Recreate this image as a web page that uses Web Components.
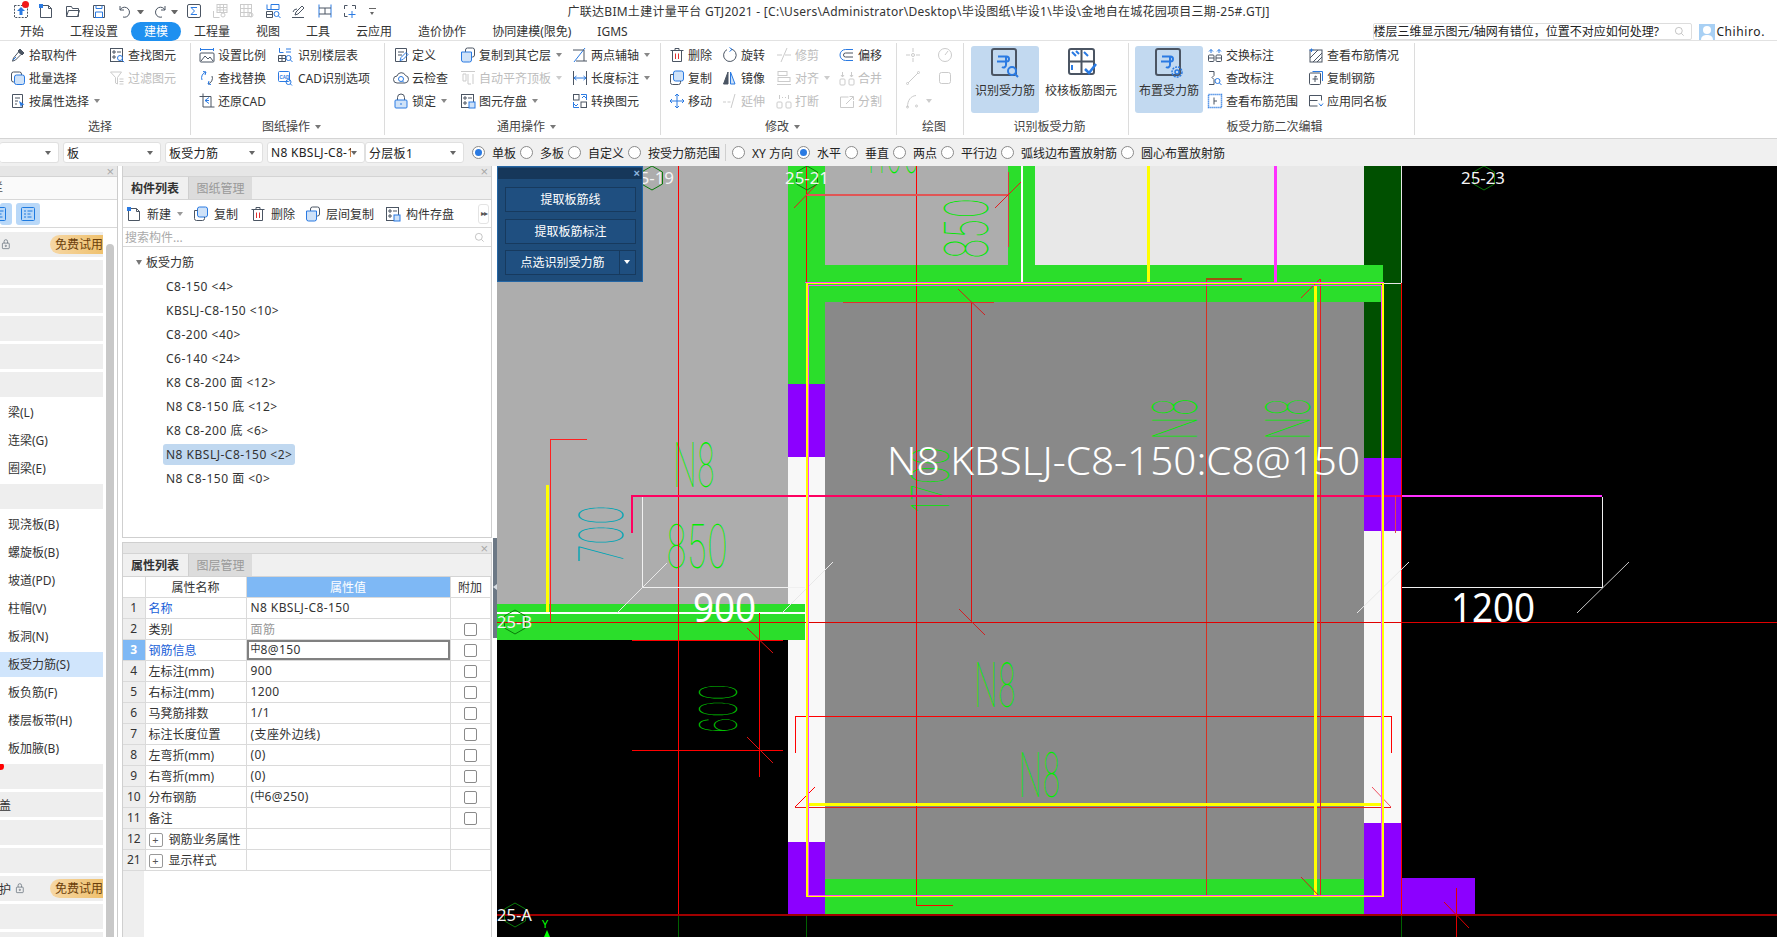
<!DOCTYPE html>
<html lang="zh">
<head>
<meta charset="utf-8">
<title>GTJ2021</title>
<style>
  html, body { margin: 0; height: 100%; overflow: hidden; background: #fff; }
  body { font: 12px "Noto Sans", "Noto Sans CJK SC", sans-serif; color: #333; }
</style>
</head>
<body>
<gtj-app>
  <gtj-titlebar slot="title">广联达BIM土建计量平台 GTJ2021 - [C:\Users\Administrator\Desktop\毕设图纸\毕设1\毕设\金地自在城花园项目三期-25#.GTJ]</gtj-titlebar>
  <gtj-tabs slot="tabs"></gtj-tabs>
  <gtj-ribbon slot="ribbon">
    <rb-group label="选择" style="width:191px;padding-left:10px">
      <rb-col style="width:99px">
        <rb-item icon="pick">拾取构件</rb-item>
        <rb-item icon="batch">批量选择</rb-item>
        <rb-item icon="attr" dd>按属性选择</rb-item>
      </rb-col>
      <rb-col>
        <rb-item icon="find">查找图元</rb-item>
        <rb-item icon="filter" disabled>过滤图元</rb-item>
      </rb-col>
    </rb-group>
    <rb-group label="图纸操作" dd style="width:194px;padding-left:8px">
      <rb-col style="width:78px">
        <rb-item icon="scale">设置比例</rb-item>
        <rb-item icon="replace">查找替换</rb-item>
        <rb-item icon="restore">还原CAD</rb-item>
      </rb-col>
      <rb-col>
        <rb-item icon="floor" wide>识别楼层表</rb-item>
        <rb-item icon="cadopt" wide>CAD识别选项</rb-item>
      </rb-col>
    </rb-group>
    <rb-group label="通用操作" dd style="width:276px;padding-left:8px">
      <rb-col style="width:67px">
        <rb-item icon="define">定义</rb-item>
        <rb-item icon="cloud">云检查</rb-item>
        <rb-item icon="lock" dd>锁定</rb-item>
      </rb-col>
      <rb-col style="width:112px">
        <rb-item icon="copyfl" dd>复制到其它层</rb-item>
        <rb-item icon="autoalign" disabled dd>自动平齐顶板</rb-item>
        <rb-item icon="store" dd>图元存盘</rb-item>
      </rb-col>
      <rb-col>
        <rb-item icon="twopt" dd>两点辅轴</rb-item>
        <rb-item icon="length" dd>长度标注</rb-item>
        <rb-item icon="convert">转换图元</rb-item>
      </rb-col>
    </rb-group>
    <rb-group label="修改" dd style="width:236px;padding-left:8px">
      <rb-col style="width:53px">
        <rb-item icon="del">删除</rb-item>
        <rb-item icon="copy">复制</rb-item>
        <rb-item icon="move">移动</rb-item>
      </rb-col>
      <rb-col style="width:54px">
        <rb-item icon="rotate">旋转</rb-item>
        <rb-item icon="mirror">镜像</rb-item>
        <rb-item icon="extend" disabled>延伸</rb-item>
      </rb-col>
      <rb-col style="width:63px">
        <rb-item icon="trim" disabled>修剪</rb-item>
        <rb-item icon="align" disabled dd>对齐</rb-item>
        <rb-item icon="break" disabled>打断</rb-item>
      </rb-col>
      <rb-col>
        <rb-item icon="offset">偏移</rb-item>
        <rb-item icon="merge" disabled>合并</rb-item>
        <rb-item icon="split" disabled>分割</rb-item>
      </rb-col>
    </rb-group>
    <rb-group label="绘图" style="width:67px;padding-left:8px">
      <rb-col style="width:32px">
        <rb-item icon="point" disabled></rb-item>
        <rb-item icon="line" disabled></rb-item>
        <rb-item icon="arc" disabled dd></rb-item>
      </rb-col>
      <rb-col>
        <rb-item icon="circle" disabled></rb-item>
        <rb-item icon="square" disabled></rb-item>
      </rb-col>
    </rb-group>
    <rb-group label="识别板受力筋" style="width:165px;padding-left:7px">
      <rb-big icon="recog" active style="width:68px">识别受力筋</rb-big>
      <rb-big icon="check" style="width:74px;margin-left:5px">校核板筋图元</rb-big>
    </rb-group>
    <rb-group label="板受力筋二次编辑" style="width:286px;padding-left:6px">
      <rb-big icon="place" active style="width:68px;margin-right:4px">布置受力筋</rb-big>
      <rb-col style="width:101px">
        <rb-item icon="swap">交换标注</rb-item>
        <rb-item icon="chg">查改标注</rb-item>
        <rb-item icon="range">查看布筋范围</rb-item>
      </rb-col>
      <rb-col>
        <rb-item icon="view">查看布筋情况</rb-item>
        <rb-item icon="rebar">复制钢筋</rb-item>
        <rb-item icon="apply">应用同名板</rb-item>
      </rb-col>
    </rb-group>
  </gtj-ribbon>
  <gtj-options slot="options"></gtj-options>
  <gtj-sidebar slot="side"></gtj-sidebar>
  <gtj-list-panel slot="list"></gtj-list-panel>
  <gtj-prop-panel slot="props"></gtj-prop-panel>
  <gtj-splitter slot="split"></gtj-splitter>
  <gtj-canvas slot="canvas">
    <gtj-float-panel></gtj-float-panel>
  </gtj-canvas>
</gtj-app>

<script>
// icon bodies, 16 grid unless the name is in BIG
const ICONS = {
  upload: '<rect x="1.5" y="2.5" width="13" height="12" stroke-dasharray="2 1.2"/><path class="s" d="M8 4l4 4H9.5v4h-3V8H4z"/>',
  newfile: '<path d="M2.5 2.5h8l3 3v9h-11z"/><path d="M10.5 2.5v3h3"/><rect class="s" x="1" y="1" width="4" height="4"/>',
  open: '<path d="M1.5 13.5v-10h5l1 2h6v8z"/><path d="M1.5 13.5l2-6h11l-2 6"/>',
  save: '<path d="M2.5 2.5h11v12h-11z" rx="2"/><path class="b" d="M5 2.5v3h6v-3M4.5 9h7v5.5h-7z"/>',
  undo: '<path d="M4 3v4h4"/><path d="M4 7a5 5 0 1 1 3 7"/>',
  redo: '<path d="M12 3v4H8"/><path d="M12 7a5 5 0 1 0-3 7"/>',
  sigma: '<rect class="n" x="1.5" y="1.5" width="13" height="13" rx="1.5"/><path class="b" d="M11 4.5H5l3.5 3.5L5 11.500h6"/>',
  qgrid: '<rect x="5" y="1.500" width="10" height="8"/><path d="M5 4.500h10M5 7h10M8 1.500v8M11.500 1.500v8"/><path d="M1.500 8v6.500h6"/><circle cx="11" cy="12" r="2"/>',
  qgrid2: '<rect x="1.500" y="1.500" width="11" height="12"/><path d="M1.500 5.500h11M1.500 9.500h11M5 1.500v12M9 1.500v12"/><circle cx="12" cy="12" r="2"/>',
  qfind: '<path class="b" d="M2 1.500v5h4M6 1.500h8v5H6z"/><path d="M1.500 8.500h6v6h-6zM1.500 11.500h6"/><circle class="b" cx="11.500" cy="11" r="2.500"/><path class="b" d="M13.500 13l2 2"/>',
  qpen: '<path d="M2 14.500h12"/><path d="M3 9a4 4 0 0 1 4-3"/><path d="M5 12l1-3 6-6 2 2-6 6z"/>',
  qruler: '<path class="b" d="M2 1.500v13M14 1.500v13"/><path d="M2 5h12M2 11h12M8 5v6"/>',
  qadd: '<path d="M2.500 6V2.500h3M10 2.500h3.500V6M2.500 10v3.500h3"/><path class="b" d="M10 8v7M6.500 11.500h7"/>',
  pick: '<path class="d" d="M10 2l4 4-2 2-4-4z"/><path d="M8.500 5l2.500 2.500-5.500 5.500-3 1.200 1-3.200z"/><path class="b" d="M3 13l3-3"/>',
  batch: '<rect x="1.500" y="2" width="10" height="10" rx="2"/><rect class="b l" x="4.500" y="5" width="10" height="9.500" rx="2"/>',
  attr: '<path d="M2.500 1.500h10v13h-10z"/><path d="M5 5h5M5 8h3M5 11h2"/><path class="s" d="M9 8l5.500 3.500-2.500.5-1 2.500z"/>',
  find: '<rect x="1.500" y="1.500" width="12" height="13"/><path d="M4 4h2v2H4zM8 5h4M4 9h2v2H4z"/><circle class="b" cx="11" cy="11" r="2.500"/><path class="b" d="M13 13l2.200 2.200"/>',
  filter: '<path d="M1.500 2h11L8.500 7.500V14l-2-1V7.500z"/><path d="M10.500 9h4M10.500 11.500h4M10.500 14h4"/>',
  scale: '<path class="b" d="M1.500 1v3M14.500 1v3M1.500 2.500h13"/><rect x="1" y="6" width="14" height="9" rx="1"/><path d="M2 14l4-5 3 3 2-2 3 4"/>',
  floor: '<path class="b" d="M2.500 1v4.500h4M9 2h5M9 5h5"/><path d="M1.500 8.500h7v6h-7zM1.500 11.500h7M5 8.500v6"/><circle class="b" cx="11.500" cy="11" r="2.500"/><path class="b" d="M13.500 13l2 2"/>',
  replace: '<path class="b" d="M3 10a6 6 0 0 1 4-8M4 1.500l3 .5-1 3"/><path d="M13 6a6 6 0 0 1-4 8"/><path class="b" d="M12 14.500l-3-.5 1-3"/>',
  cadopt: '<rect class="b" x="1.500" y="1.500" width="11" height="10" rx="1"/><text class="t" x="2.500" y="8.500">CAD</text><circle class="b" cx="11.500" cy="12" r="2.500"/><path class="b" d="M13.500 14l1.500 1.500"/>',
  restore: '<path d="M4 .500v13.500h11.500M.500 3.500H12v10.500"/><path class="b" d="M10 4.500L6 7.500l4 3M6 7.500h4"/>',
  define: '<path d="M2.500 1.500h11v13h-11z"/><path d="M5 5h6M5 8h4"/><path class="b" d="M7 13.500l1-3 5-5 2 2-5 5z"/>',
  cloud: '<path d="M4 13a3.500 3.500 0 0 1 0-7 4.500 4.500 0 0 1 8.500-.500A3.800 3.800 0 0 1 12 13z"/><circle class="b" cx="8" cy="9" r="2.500"/><path class="b" d="M9.500 11l1.500 1.500"/>',
  lock: '<path d="M4.500 7V4.500a3.500 3.500 0 0 1 7 0V7"/><rect class="b l" x="2" y="7" width="12" height="8" rx="1"/><path class="b" d="M8 10v2"/>',
  copyfl: '<rect x="5.500" y="1" width="9" height="9" rx="2" class="n"/><path class="b l" d="M1.500 5h10v8a2 2 0 0 1-2 2h-6a2 2 0 0 1-2-2z"/>',
  autoalign: '<path d="M1 1.500h14M3 4v7h3V4zM8 4v10h3"/><path d="M13 4v10"/>',
  store: '<rect x="1.500" y="1.500" width="12" height="13"/><path d="M4 4h2v2H4zM8 5h4M4 9h2v2H4z"/><rect class="b l" x="9" y="9" width="6" height="6"/>',
  twopt: '<path class="b" d="M2 15L13 1"/><path d="M1 3h11v11"/><path d="M4 14h11"/>',
  length: '<path d="M1.500 1v14M14.500 1v14"/><path class="b" d="M2 8h12M4.500 6L2 8l2.500 2M11.500 6L14 8l-2.500 2"/>',
  convert: '<rect x="1.500" y="1.500" width="5.500" height="5.500"/><rect x="9" y="9" width="5.500" height="5.500"/><path class="b" d="M9 1.500h5.500V7M7 14.500H1.500V9"/><path class="b" d="M10 5l2-2 2 2M2 11l2 2 2-2"/>',
  del: '<path d="M3.500 4v10.500h9V4M1.500 3.500h13M6 3V1.500h4V3"/><path class="r" d="M6.500 6.500v5.500M9.500 6.500v5.500"/>',
  copy: '<rect class="b l" x="4.500" y="1" width="10" height="10" rx="2"/><path d="M4.500 4.500H1.500v8a2 2 0 0 0 2 2h6a2 2 0 0 0 2-2v-1.500"/>',
  move: '<path class="b" d="M8 1v14M1 8h14M6 3l2-2 2 2M6 13l2 2 2-2M3 6L1 8l2 2M13 6l2 2-2 2"/>',
  rotate: '<path d="M9 2a6.300 6.300 0 1 1-4 .600"/><path class="b" d="M7.500 .500L10 2.500 7.500 4.500"/>',
  mirror: '<path class="d" d="M6 2L1.500 14H6z"/><path class="b l" d="M8.500 2L13 14H8.500z"/>',
  extend: '<path d="M1 9h3M5.500 9h3"/><path d="M9 15L13 1"/>',
  trim: '<path d="M1 8h5M9 8h6"/><path d="M5 15L11 1"/>',
  align: '<rect x="2" y="1.500" width="9" height="4"/><rect x="2" y="7.500" width="12" height="4"/><path d="M1 14.500h14"/>',
  break: '<rect x="1" y="9" width="5" height="6" rx="1"/><rect x="10" y="9" width="5" height="6" rx="1"/><path d="M3.500 2v4M12.500 2v4M6 4l1 1M10 4L9 5"/>',
  offset: '<path class="b" d="M14 2.500H6.500a5.500 5.500 0 0 0 0 11H14"/><path d="M14 6H6.500a2 2 0 0 0 0 4H14"/>',
  merge: '<rect x="1" y="9" width="5" height="6" rx="1"/><rect x="10" y="9" width="5" height="6" rx="1"/><path d="M3.500 2v5M12.500 2v5M2 5l1.500 2L5 5M11 5l1.500 2L14 5"/>',
  split: '<path d="M1.500 4h8M1.500 4v10.500h13V8"/><path d="M7 11l7-7M10.500 3.500H14.500V7"/>',
  point: '<circle cx="8" cy="8" r="1.500"/><path d="M8 1v4M8 11v4M1 8h4M11 8h4"/>',
  circle: '<circle cx="8" cy="8" r="6.500"/><path d="M8 8l3-4"/>',
  line: '<circle cx="2.500" cy="13.500" r="1"/><circle cx="13.500" cy="2.500" r="1"/><path d="M3 13L13 3"/>',
  square: '<rect x="2.500" y="2.500" width="11" height="11" rx="2"/>',
  arc: '<path d="M2.500 14C2.500 7 6 3 11 2.500"/><circle cx="2.500" cy="14" r="1"/><circle cx="11.500" cy="13" r="1"/>',
  swap: '<path class="b" d="M2 4.500L4 2.500 6 4.500M14 4.500L12 2.500 10 4.500M4 2.500V6M12 2.500V6"/><rect x="1.500" y="8" width="5.500" height="6.500" rx="1"/><rect x="9" y="8" width="5.500" height="6.500" rx="1"/><path d="M1.500 11h5.500M9 11h5.500"/>',
  chg: '<path d="M2 1.500h5v4l-2 2 2 2v5H2"/><circle class="b" cx="10.500" cy="11" r="2.500"/><path class="b" d="M12.500 13l2 2"/>',
  range: '<rect class="b" x="1.500" y="1.500" width="13" height="13" stroke-dasharray="1.200 .8" stroke-width="1.500"/><path d="M7 4.500v7M7 8h3"/>',
  view: '<rect x="2" y="3" width="12" height="12"/><path d="M2 11l8-8M5 15L14 6M9 15l5-5"/><path class="b" d="M3.500 1.500v3.500M1.500 3h4"/>',
  rebar: '<rect x="1.500" y="3" width="11" height="11.500" rx="1"/><path class="b" d="M4.500 1.500h10V11"/><path d="M7 6v6M4.500 9H10M7 6l2 1"/>',
  apply: '<path d="M1.500 2.500h12v5M1.500 2.500v10.500h8M1.500 7.500h8"/><path class="b" d="M11 10.500l2 2.500 2-2.500"/>',
  recog: '<rect x="3" y="2" width="24" height="26" rx="2" stroke-width="2"/><path class="b" stroke-width="2" d="M9 9.500h8.500a2.500 2.500 0 0 1 0 5H8M17 9v9a2.500 2.500 0 0 1-4 2"/><circle class="b" cx="23" cy="24" r="4" stroke-width="2"/><path class="b" stroke-width="2" d="M26 27l3 3"/>',
  check: '<rect x="4" y="2" width="25" height="25" rx="2" stroke-width="2"/><path stroke-width="2" d="M16.500 2v25M4 14.500h25"/><path class="b" stroke-width="2" d="M7 5l4 4M11 4l3 3M19 5l4 4M7 18v5"/><path class="b" stroke-width="2.500" d="M20 22l4 4 7-9"/>',
  place: '<rect x="3" y="2" width="24" height="26" rx="2" stroke-width="2"/><path class="b" stroke-width="2" d="M9 9.500h8.500a2.500 2.500 0 0 1 0 5H8M17 9v9a2.500 2.500 0 0 1-4 2"/><circle class="b" cx="24" cy="25" r="2" stroke-width="1.500"/><circle class="b" cx="24" cy="25" r="5" stroke-width="1.500" stroke-dasharray="2 1"/>',
  list1: '<rect class="b" x="1.500" y="1.500" width="13" height="13" rx="1"/><path class="b" d="M4 5h2M7.500 5h5M4 8h2M7.500 8h3M4 11h2M7.500 11h4"/>',
  plock: '<rect x="2" y="6" width="10" height="8" rx="1"/><path d="M4.500 6V3.500a2.500 2.500 0 0 1 5 0V6"/><circle cx="7" cy="10" r="1"/>',
  search: '<circle cx="7" cy="7" r="5"/><path d="M11 11l3 3"/>'
};
const BIG = ['recog', 'check', 'place'];

class GtjIcon extends HTMLElement {
  constructor() {
    super();
    const name = this.getAttribute('name');
    const box = BIG.includes(name) ? 32 : 16;
    this.attachShadow({ mode: 'open' }).innerHTML = `
      <style>
        :host { display: inline-block; width: 16px; height: 16px; flex: none; color: #4b5563; --b: #2a7ae2; }
        :host([disabled]) { color: #cbcbcb; --b: #cbcbcb; }
        svg { display: block; width: 100%; height: 100%; fill: none; stroke: currentColor; stroke-width: 1; }
        .b { stroke: var(--b); }
        .l { fill: #cfe2f8; }
        .s { fill: var(--b); stroke: none; }
        .d { fill: currentColor; }
        .r { stroke: #e03030; }
        .n { fill: #fff; }
        .t { fill: var(--b); stroke: none; font: bold 4.500px "Liberation Sans", sans-serif; }
      </style>
      <svg viewBox="0 0 ${box} ${box}">${ICONS[name] || ''}</svg>`;
  }
}
customElements.define('gtj-icon', GtjIcon);

class GtjApp extends HTMLElement {
  constructor() {
    super();
    this.attachShadow({ mode: 'open' }).innerHTML = `
      <style>
        :host { display: flex; flex-direction: column; height: 937px; width: 1777px; overflow: hidden; }
        .main { flex: 1; min-height: 0; display: flex; }
        .mid { width: 371px; margin-left: 4px; display: flex; flex-direction: column; gap: 4px; flex: none; }
      </style>
      <slot name="title"></slot>
      <slot name="tabs"></slot>
      <slot name="ribbon"></slot>
      <slot name="options"></slot>
      <div class="main">
        <slot name="side"></slot>
        <div class="mid">
          <slot name="list"></slot>
          <slot name="props"></slot>
        </div>
        <slot name="split"></slot>
        <slot name="canvas"></slot>
      </div>`;
  }
}
customElements.define('gtj-app', GtjApp);

class GtjTitlebar extends HTMLElement {
  constructor() {
    super();
    // icon name and centre x along the quick access bar
    const qat = [['upload', 21], ['newfile', 46], ['open', 73], ['save', 99], ['undo', 124], ['dd', 140], ['redo', 161], ['dd', 174],
      ['sigma', 194], ['qgrid', 220, 1], ['qgrid2', 247, 1], ['qfind', 273], ['qpen', 298], ['qruler', 325], ['qadd', 350], ['more', 372]];
    let right = 0;
    const html = qat.map(([n, c, off]) => {
      const w = n === 'dd' || n === 'more' ? 7 : 16;
      const left = c - w / 2 - right;
      right = c + w / 2;
      if (n === 'dd') return `<i class="dd" style="margin-left:${left}px"></i>`;
      if (n === 'more') return `<i class="more" style="margin-left:${left}px"></i>`;
      return `<gtj-icon name="${n}" ${off ? 'disabled' : ''} style="margin-left:${left}px"></gtj-icon>`;
    }).join('');
    this.attachShadow({ mode: 'open' }).innerHTML = `
      <style>
        :host { display: flex; align-items: center; height: 22px; flex: none; background: #fff; white-space: nowrap; position: relative; }
        .dd { width: 0; height: 0; border: 3px solid transparent; border-top: 4px solid #666; border-bottom: 0; margin-top: 1px; box-sizing: content-box; width: 1px; }
        .more { width: 7px; height: 6px; border-top: 1px solid #666; position: relative; }
        .more::after { content: ""; position: absolute; left: 1px; top: 3px; border: 2.500px solid transparent; border-top: 3px solid #666; border-bottom: 0; }
        .dot { position: absolute; left: 22px; top: 1px; width: 7px; height: 7px; border-radius: 50%; background: #f01818; }
        .t { margin-left: 192px; color: #333; letter-spacing: .27px; }
      </style>
      ${html}<span class="dot"></span><span class="t"><slot></slot></span>`;
  }
}
customElements.define('gtj-titlebar', GtjTitlebar);

class GtjTabs extends HTMLElement {
  constructor() {
    super();
    const tabs = ['开始', '工程设置', '建模', '工程量', '视图', '工具', '云应用', '造价协作', '协同建模(限免)', 'IGMS'];
    this.attachShadow({ mode: 'open' }).innerHTML = `
      <style>
        :host { display: flex; align-items: center; height: 19px; padding-left: 7px; flex: none; background: #fff; box-shadow: inset 0 -1px 0 #e2e2e2; font-size: 12px; color: #333; white-space: nowrap; }
        .tab { padding: 0 13px; height: 19px; line-height: 20px; }
        .on { background: #1e90f0; color: #fff; border-radius: 10px; }
        .q { margin-left: auto; width: 317px; height: 15px; border: 1px solid #ddd; border-radius: 2px; display: flex; align-items: center; overflow: hidden; color: #222; background: #fff; }
        .q span { flex: 1; margin-left: -1px; line-height: 15px; }
        .q gtj-icon { width: 11px; height: 11px; margin: 0 6px 0 0; color: #aaa; }
        .ava { width: 16px; height: 16px; margin: 0 1px 0 7px; }
        .me { margin-right: 12px; letter-spacing: .6px; color: #222; }
      </style>
      ${tabs.map((t, i) => `<div class="tab ${i === 2 ? 'on' : ''}">${t}</div>`).join('')}
      <div class="q"><span>楼层三维显示图元/轴网有错位，位置不对应如何处理?</span><gtj-icon name="search"></gtj-icon></div>
      <svg class="ava" viewBox="0 0 16 16"><rect width="16" height="16" fill="#a8d0f4"/><circle cx="8" cy="6" r="4" fill="#fff"/><path d="M2 16c0-4 3-5 6-5s6 1 6 5z" fill="#fff"/></svg>
      <span class="me">Chihiro.</span>`;
  }
}
customElements.define('gtj-tabs', GtjTabs);

class GtjRibbon extends HTMLElement {
  constructor() {
    super();
    this.attachShadow({ mode: 'open' }).innerHTML = `
      <style>
        :host { display: flex; height: 98px; flex: none; background: #fff; padding-top: 2px; box-sizing: border-box; box-shadow: inset 0 -1px 0 #d4d4d4; }
      </style>
      <slot></slot>`;
  }
}
customElements.define('gtj-ribbon', GtjRibbon);

class RbGroup extends HTMLElement {
  constructor() {
    super();
    const dd = this.hasAttribute('dd');
    this.attachShadow({ mode: 'open' }).innerHTML = `
      <style>
        :host { display: flex; flex-direction: column; height: 92px; flex: none; box-sizing: border-box; border-right: 1px solid #dcdcdc; }
        .body { display: flex; flex: 1; }
        .lab { height: 16px; line-height: 18px; text-align: center; color: #444; display: flex; justify-content: center; align-items: center; gap: 5px; }
        .lab i { border: 3.500px solid transparent; border-top: 4px solid #777; border-bottom: 0; }
      </style>
      <div class="body"><slot></slot></div>
      <div class="lab">${this.getAttribute('label')}${dd ? '<i></i>' : ''}</div>`;
  }
}
customElements.define('rb-group', RbGroup);

class RbCol extends HTMLElement {
  constructor() {
    super();
    this.attachShadow({ mode: 'open' }).innerHTML = `
      <style>:host { display: flex; flex-direction: column; flex: none; }</style><slot></slot>`;
  }
}
customElements.define('rb-col', RbCol);

class RbItem extends HTMLElement {
  constructor() {
    super();
    const off = this.hasAttribute('disabled');
    this.attachShadow({ mode: 'open' }).innerHTML = `
      <style>
        :host { display: flex; align-items: center; height: 23px; gap: 3px; color: #333; white-space: nowrap; }
        :host([disabled]) { color: #bdbdbd; }
        :host([wide]) { gap: 5px; }
        i { border: 3px solid transparent; border-top: 4px solid #888; border-bottom: 0; margin-left: 2px; }
        :host([disabled]) i { border-top-color: #ccc; }
      </style>
      <gtj-icon name="${this.getAttribute('icon')}" ${off ? 'disabled' : ''}></gtj-icon><slot></slot>${this.hasAttribute('dd') ? '<i></i>' : ''}`;
  }
}
customElements.define('rb-item', RbItem);

class RbBig extends HTMLElement {
  constructor() {
    super();
    this.attachShadow({ mode: 'open' }).innerHTML = `
      <style>
        :host { display: flex; flex-direction: column; align-items: center; height: 67px; margin-top: 3px; padding-top: 1px; box-sizing: border-box; border-radius: 3px; white-space: nowrap; color: #333; flex: none; }
        :host([active]) { background: #c2d9f0; }
        gtj-icon { width: 32px; height: 32px; margin-bottom: 2px; }
      </style>
      <gtj-icon name="${this.getAttribute('icon')}"></gtj-icon><slot></slot>`;
  }
}
customElements.define('rb-big', RbBig);

class GtjOptions extends HTMLElement {
  constructor() {
    super();
    const combos = [['', 59], ['板', 98], ['板受力筋', 98], ['N8 KBSLJ-C8-150', 98], ['分层板1', 99]];
    const radios = [['单板', 1], ['多板'], ['自定义'], ['按受力筋范围'], '|', ['XY 方向'], ['水平', 1], ['垂直'], ['两点'], ['平行边'], ['弧线边布置放射筋'], ['圆心布置放射筋']];
    this.attachShadow({ mode: 'open' }).innerHTML = `
      <style>
        :host { display: flex; align-items: center; height: 27px; flex: none; background: #f0f0f0; white-space: nowrap; color: #222; overflow: hidden; }
        .combo { height: 21px; box-sizing: border-box; border: 1px solid #e0e0e0; border-radius: 3px; background: #fff; margin-right: 4px; display: flex; align-items: center; padding: 0 3px; flex: none; position: relative; overflow: hidden; }
        .combo:nth-child(5) { margin-right: 0; }
        .combo span { overflow: hidden; width: calc(100% - 10px); letter-spacing: .3px; }
        .combo i { position: absolute; right: 7px; top: 8px; border: 3px solid transparent; border-top: 4px solid #666; border-bottom: 0; }
        .combo:first-of-type { border-left: 0; }
        .r { width: 13px; height: 13px; box-sizing: border-box; border: 1px solid #8a8a8a; border-radius: 50%; background: #fff; margin-left: 3.500px; margin-right: 7.500px; flex: none; display: flex; align-items: center; justify-content: center; }
        .r.on::after { content: ""; width: 7px; height: 7px; border-radius: 50%; background: #2a7ae2; }
        .sep { width: 1px; height: 17px; background: #cfcfcf; margin: 0 2px 0 5px; flex: none; }
      </style>
      ${combos.map(([t, w]) => `<div class="combo" style="width:${w}px"><span>${t}</span><i></i></div>`).join('')}
      ${radios.map(r => r === '|' ? '<div class="sep"></div>' : `<div class="r ${r[1] ? 'on' : ''}"></div><span>${r[0]}</span>`).join('')}`;
  }
}
customElements.define('gtj-options', GtjOptions);

class GtjPanelHead extends HTMLElement {
  constructor() {
    super();
    this.attachShadow({ mode: 'open' }).innerHTML = `
      <style>
        :host { display: flex; justify-content: flex-end; align-items: center; height: 11px; background: #e6e6e6; border-bottom: 1px solid #d4d4d4; flex: none; color: #a8a8a8; font: 13px/11px "Liberation Sans", sans-serif; padding-right: 3px; box-sizing: border-box; }
      </style>×`;
  }
}
customElements.define('gtj-panel-head', GtjPanelHead);

class GtjPanelTabs extends HTMLElement {
  constructor() {
    super();
    this.attachShadow({ mode: 'open' }).innerHTML = `
      <style>
        :host { display: flex; height: 23px; background: #f0f0f0; border-bottom: 1px solid #d4d4d4; flex: none; box-sizing: border-box; }
        div { width: 64px; line-height: 24px; text-align: center; box-sizing: border-box; margin-right: 1px; }
        .on { font-weight: bold; color: #333; background: #f0f0f0; }
        .off { color: #999; background: #dcdcdc; border-left: 1px solid #cfcfcf; }
      </style>
      <div class="on">${this.getAttribute('a')}</div><div class="off">${this.getAttribute('b')}</div>`;
  }
}
customElements.define('gtj-panel-tabs', GtjPanelTabs);

class GtjSidebar extends HTMLElement {
  constructor() {
    super();
    const pill = '<span class="pill">免费试用</span>';
    const lock = '<gtj-icon class="lk" name="plock"></gtj-icon>';
    const rows = [
      ['g', lock + pill], ['g'], ['g'], ['g'], ['g'], ['g'],
      ['w', '梁(L)'], ['w', '连梁(G)'], ['w', '圈梁(E)'], ['g'],
      ['w', '现浇板(B)'], ['w', '螺旋板(B)'], ['w', '坡道(PD)'], ['w', '柱帽(V)'], ['w', '板洞(N)'],
      ['s', '板受力筋(S)'], ['w', '板负筋(F)'], ['w', '楼层板带(H)'], ['w', '板加腋(B)'],
      ['g', '<span class="red"></span>'], ['g', '<span class="cut">覆盖</span>'], ['g'], ['g'],
      ['g', '<span class="cut">防护</span>' + lock + pill], ['g'], ['g']
    ];
    this.attachShadow({ mode: 'open' }).innerHTML = `
      <style>
        :host { display: flex; flex-direction: column; width: 118px; flex: none; background: #fff; border-right: 1px solid #ccc; box-sizing: border-box; overflow: hidden; }
        .sub { height: 23px; line-height: 22px; border-bottom: 1px solid #d8d8d8; background: #fafafa; overflow: hidden; text-indent: -9px; color: #555; flex: none; box-sizing: border-box; }
        .bar { height: 28px; border-bottom: 1px solid #d8d8d8; display: flex; align-items: center; gap: 4px; flex: none; box-sizing: border-box; }
        .btn { height: 22px; background: #b9d8f8; border-radius: 3px; display: flex; align-items: center; justify-content: center; overflow: hidden; }
        .btn gtj-icon { --b: #1e7ae0; }
        .wrap { flex: 1; display: flex; min-height: 0; padding-top: 4px; }
        .list { width: 103px; display: flex; flex-direction: column; gap: 3px; flex: none; }
        .row { height: 25px; padding-left: 8px; flex: none; display: flex; align-items: center; color: #333; position: relative; box-sizing: border-box; overflow: hidden; }
        .w, .s { padding-bottom: 1px; }
        .g { background: #eee; padding-left: 0; }
        .s { background: #d0e5fc; }
        .pill { margin-left: auto; width: 53px; height: 19px; line-height: 19px; border-radius: 10px 0 0 10px; background: linear-gradient(90deg, #f6d7a5, #efc16e); color: #6b3e0a; text-align: right; flex: none; }
        .lk { width: 11px; height: 11px; margin-left: 1px; color: #5a6672; }
        .cut { margin-left: -13px; margin-right: 3px; }
        .red { width: 7px; height: 7px; border-radius: 50%; background: #f00; margin-left: -3px; margin-top: -21px; }
        .track { width: 8px; margin: 12px 0 0 3px; background: #c8c8c8; border-radius: 4px 4px 0 0; }
      </style>
      <gtj-panel-head></gtj-panel-head>
      <div class="sub">栏</div>
      <div class="bar"><div class="btn" style="width:12px"><gtj-icon name="list1" style="margin-left:-14px"></gtj-icon></div><div class="btn" style="width:24px"><gtj-icon name="list1"></gtj-icon></div></div>
      <div class="wrap">
        <div class="list">${rows.map(([c, h]) => `<div class="row ${c}">${h || ''}</div>`).join('')}</div>
        <div class="track"></div>
      </div>`;
  }
}
customElements.define('gtj-sidebar', GtjSidebar);

class GtjListPanel extends HTMLElement {
  constructor() {
    super();
    const rows = ['C8-150 &lt;4&gt;', 'KBSLJ-C8-150 &lt;10&gt;', 'C8-200 &lt;40&gt;', 'C6-140 &lt;24&gt;', 'K8 C8-200 面 &lt;12&gt;', 'N8 C8-150 底 &lt;12&gt;', 'K8 C8-200 底 &lt;6&gt;', 'N8 KBSLJ-C8-150 &lt;2&gt;', 'N8 C8-150 面 &lt;0&gt;'];
    const tools = [['newfile', '新建', 10, 1], ['copy', '复制', 12], ['del', '删除', 10], ['copyfl', '层间复制', 11], ['store', '构件存盘', 0]];
    this.attachShadow({ mode: 'open' }).innerHTML = `
      <style>
        :host { display: flex; flex-direction: column; height: 372px; flex: none; border: 1px solid #cfcfcf; border-top: 0; box-sizing: border-box; background: #fff; width: 370px; }
        .tools { height: 28px; display: flex; align-items: center; border-bottom: 1px solid #d8d8d8; padding: 1px 0 0 3px; box-sizing: border-box; position: relative; flex: none; white-space: nowrap; }
        .tools gtj-icon { margin-right: 5px; }
        .t { display: flex; align-items: center; }
        .dd { border: 3px solid transparent; border-top: 4px solid #999; border-bottom: 0; margin-left: 6px; }
        .more { position: absolute; right: 2px; top: 4px; width: 9px; height: 18px; border: 1px solid #e4e4e4; border-radius: 3px; color: #555; font: 8px/18px "Liberation Sans", sans-serif; text-align: center; letter-spacing: -1px; }
        .search { height: 19px; line-height: 20px; border-bottom: 1px solid #d8d8d8; color: #aaa; padding-left: 2px; display: flex; justify-content: space-between; align-items: center; flex: none; box-sizing: border-box; }
        .search span { padding-top: 2px; }
        .search gtj-icon { width: 11px; height: 11px; color: #aaa; margin-right: 6px; }
        .tree { padding-top: 3px; color: #333; }
        .root { height: 24px; line-height: 26px; padding-left: 23px; position: relative; }
        .root::before { content: ""; position: absolute; left: 13px; top: 10px; border: 3.500px solid transparent; border-top: 5px solid #777; border-bottom: 0; }
        .n { height: 24px; display: flex; align-items: center; padding-left: 40px; }
        .n span { padding: 0 3px; height: 21px; line-height: 21px; border-radius: 3px; letter-spacing: .5px; }
        .n .sel { background: #c0d8f0; }
      </style>
      <gtj-panel-head></gtj-panel-head>
      <gtj-panel-tabs a="构件列表" b="图纸管理"></gtj-panel-tabs>
      <div class="tools">${tools.map(([ic, t, m, dd]) => `<div class="t" style="margin-right:${m}px"><gtj-icon name="${ic}"></gtj-icon>${t}${dd ? '<i class="dd"></i>' : ''}</div>`).join('')}<div class="more">▸▸</div></div>
      <div class="search"><span>搜索构件...</span><gtj-icon name="search"></gtj-icon></div>
      <div class="tree"><div class="root">板受力筋</div>${rows.map((r, i) => `<div class="n"><span class="${i === 7 ? 'sel' : ''}">${r}</span></div>`).join('')}</div>`;
  }
}
customElements.define('gtj-list-panel', GtjListPanel);

class GtjPropPanel extends HTMLElement {
  constructor() {
    super();
    const rb = s => `<span class="rb">中</span>${s}`;
    const rows = [
      [1, '名称', 'N8 KBSLJ-C8-150', 0, 'blue'], [2, '类别', '<span class="mute">面筋</span>', 1],
      [3, '钢筋信息', rb('8@150'), 1, 'blue sel'], [4, '左标注(mm)', '900', 1], [5, '右标注(mm)', '1200', 1], [6, '马凳筋排数', '1/1', 1],
      [7, '标注长度位置', '(支座外边线)', 1], [8, '左弯折(mm)', '(0)', 1], [9, '右弯折(mm)', '(0)', 1], [10, '分布钢筋', '(' + rb('6@250') + ')', 1], [11, '备注', '', 1],
      [12, '钢筋业务属性', '', 0, 'plus'], [21, '显示样式', '', 0, 'plus']
    ];
    this.attachShadow({ mode: 'open' }).innerHTML = `
      <style>
        :host { display: flex; flex-direction: column; flex: 1; min-height: 0; border: 1px solid #cfcfcf; border-bottom: 0; box-sizing: border-box; width: 370px; background: #fff; }
        .body { flex: 1; position: relative; background: linear-gradient(90deg, #eee 21px, #fff 21px); }
        table { border-collapse: collapse; table-layout: fixed; width: 367px; }
        td, th { height: 20px; padding: 0; border: 1px solid #dadada; font-weight: normal; box-sizing: border-box; white-space: nowrap; }
        td, th { border-left-width: 0; border-top-width: 0; }
        tr { height: 21px; }
        thead tr { height: 20px; }
        th { background: #fff; color: #333; }
        th.v { background: #7eb8f5; color: #fff; }
        .i { background: #eee; text-align: center; }
        .nm { padding-left: 3px; }
        .val { padding-left: 4px; letter-spacing: .4px; }
        .blue .nm { color: #1a5fd8; }
        .sel .i { background: #7eb8f5; color: #fff; font-weight: bold; }
        .sel .val { box-shadow: inset 0 0 0 2px #808080; }
        .mute { color: #999; }
        .rb { font-size: 10px; position: relative; top: -2px; letter-spacing: 0; }
        .c { text-align: center; }
        .c i { display: inline-block; width: 13px; height: 13px; box-sizing: border-box; border: 1px solid #8a8a8a; border-radius: 2px; background: #fff; vertical-align: middle; }
        .p { display: inline-block; width: 12px; height: 12px; line-height: 11px; border: 1px solid #999; border-radius: 2px; text-align: center; margin-right: 6px; font-size: 11px; color: #555; vertical-align: middle; box-sizing: content-box; }
      </style>
      <gtj-panel-head></gtj-panel-head>
      <gtj-panel-tabs a="属性列表" b="图层管理"></gtj-panel-tabs>
      <div class="body">
        <table>
          <colgroup><col style="width:22px"><col style="width:101px"><col style="width:204px"><col style="width:40px"></colgroup>
          <thead><tr><th></th><th>属性名称</th><th class="v">属性值</th><th>附加</th></tr></thead>
          <tbody>${rows.map(([n, name, v, chk, cls]) => `<tr class="${cls || ''}"><td class="i">${n}</td><td class="nm">${cls === 'plus' ? '<span class="p">+</span>' : ''}${name}</td><td class="val">${v}</td><td class="c">${chk ? '<i></i>' : ''}</td></tr>`).join('')}</tbody>
        </table>
      </div>`;
  }
}
customElements.define('gtj-prop-panel', GtjPropPanel);

class GtjSplitter extends HTMLElement {
  constructor() {
    super();
    this.attachShadow({ mode: 'open' }).innerHTML = `
      <style>
        :host { display: block; width: 4px; margin-left: 0; flex: none; background: #fff; position: relative; }
        .h { position: absolute; left: 0; right: 0; top: 372px; height: 100px; background: #6c7885; }
        .h::after { content: ""; position: absolute; left: 0; top: 46px; border: 3px solid transparent; border-right: 4px solid #d8dde2; border-left: 0; }
      </style>
      <div class="h"></div>`;
  }
}
customElements.define('gtj-splitter', GtjSplitter);

class GtjFloatPanel extends HTMLElement {
  constructor() {
    super();
    this.attachShadow({ mode: 'open' }).innerHTML = `
      <style>
        :host { position: absolute; left: 0; top: 0; width: 146px; height: 116px; box-sizing: border-box; background: #1e4c7a; border: 1px solid #2566a4; color: #fff; }
        .h { height: 11px; margin-top: 1px; background: #16375a; color: #8fb8e0; text-align: right; padding-right: 2px; font: bold 11px/11px "Liberation Sans", sans-serif; }
        .b { margin: 8px 6px 0 7px; height: 25px; line-height: 23px; box-sizing: border-box; border: 1px solid #173a5e; background: #1f4f80; text-align: center; display: flex; }
        .b + .b { margin-top: 7px; }
        .b:last-child { margin-top: 6px; }
        .b span { flex: 1; }
        .b i { width: 15px; border-left: 1px solid #173a5e; position: relative; }
        .b i::after { content: ""; position: absolute; left: 4px; top: 9px; border: 3.500px solid transparent; border-top: 4px solid #fff; border-bottom: 0; }
      </style>
      <div class="h">×</div>
      <div class="b"><span>提取板筋线</span></div>
      <div class="b"><span>提取板筋标注</span></div>
      <div class="b"><span>点选识别受力筋</span><i></i></div>`;
  }
}
customElements.define('gtj-float-panel', GtjFloatPanel);

class GtjCanvas extends HTMLElement {
  constructor() {
    super();
    const rect = (x, y, w, h, c) => `<rect x="${x}" y="${y}" width="${w}" height="${h}" fill="${c}"/>`;
    const seg = (d, c, w) => `<path d="${d}" stroke="${c}" stroke-width="${w || 1}" fill="none"/>`;
    const G = '#2bde2b', P = '#8c00ff', W = '#f8f8f8', R = '#ff0000';
    const hex = (x, y) => `<polygon points="${x},${y - 12} ${x + 10.500},${y - 6} ${x + 10.500},${y + 6} ${x},${y + 12} ${x - 10.500},${y + 6} ${x - 10.500},${y - 6}" fill="none" stroke="#0a7a0a"/>`;
    const lab = (x, y, t) => `<text class="lab" x="${x}" y="${y}" textLength="${t.length === 5 ? 44 : 35}" lengthAdjust="spacingAndGlyphs">${t}</text>`;
    // x,y = left and baseline, w = text length, h = glyph height; rot turns the text to read upwards
    const cad = (x, y, w, h, t, c, rot) => {
      const fs = h / 0.727;
      const tf = rot ? `transform="translate(${x},${y}) rotate(-90)"` : `transform="translate(${x},${y})"`;
      return `<text class="cad" ${tf} font-size="${fs}" fill="${c || '#00ee00'}" textLength="${w}" lengthAdjust="spacingAndGlyphs">${t}</text>`;
    };
    const big = (x, y, w, t, fs, cls) => `<text class="big ${cls || ''}" x="${x}" y="${y}" font-size="${fs}" textLength="${w}" lengthAdjust="spacingAndGlyphs">${t}</text>`;
    this.attachShadow({ mode: 'open' }).innerHTML = `
      <style>
        :host { display: block; flex: 1; min-width: 0; position: relative; background: #000; overflow: hidden; }
        svg { display: block; width: 1280px; height: 771px; }
        .lab { fill: #f4f4f4; font: 17px "Noto Sans", sans-serif; }
        .cad { font-family: Inter, "Noto Sans", sans-serif; font-weight: 100; }
        .big { fill: #fff; font-family: "Noto Sans", sans-serif; font-weight: 300; }
        .num { font-weight: 400; }
      </style>
      <svg viewBox="497 166 1280 771" shape-rendering="crispEdges">
        ${rect(497, 166, 291, 438, '#adadad')}${rect(825, 166, 183, 99, '#adadad')}
        ${rect(1035, 166, 329, 99, '#e8e8e8')}${rect(825, 302, 539, 577, '#898989')}
        ${rect(1364, 166, 37, 292, '#005000')}
        ${rect(788, 457, 37, 385, W)}${rect(1364, 531, 37, 292, W)}
        ${rect(788, 166, 37, 218, G)}${rect(1008, 166, 27, 99, G)}${rect(825, 265, 558, 18, G)}${rect(825, 283, 556, 19, G)}
        ${rect(825, 879, 539, 36, G)}${rect(497, 604, 308, 36, G)}
        ${rect(788, 384, 37, 73, P)}${rect(788, 842, 37, 73, P)}${rect(1364, 458, 37, 73, P)}${rect(1364, 823, 37, 92, P)}${rect(1401, 878, 74, 37, P)}

        ${seg('M497 613H805', '#fff', 2)}
        ${seg('M1022 166V283', '#fff', 2)}${seg('M1384 283H1401V166', '#e8e8e8', 1)}
        ${seg('M1148 166V283', '#ffff00', 3)}${seg('M1275 166V283', '#ff30ff', 3)}
        ${seg('M547 485V612', '#ffff00', 3)}

        <g shape-rendering="auto">
          ${cad(673, 486.500, 42, 44.500, 'N8', '#00ee00')}
          ${cad(666, 568, 62, 44, '850', '#00ee00')}
          ${cad(622.500, 563, 58, 44.500, '700', '#00a5b5', 1)}
          ${cad(988, 259, 61, 44, '850', '#00e800', 1)}
          ${cad(864, 172.500, 56, 44, '1100', '#00ee00')}
          ${cad(949, 513, 66, 38, '1700', '#00e800', 1)}
          ${cad(1196.500, 440, 42, 45, 'N8', '#00ee00', 1)}
          ${cad(1310, 440, 42, 44.500, 'N8', '#00ee00', 1)}
          ${cad(974, 706.500, 42, 44.500, 'N8', '#00ee00')}
          ${cad(1018.500, 797.300, 42, 45, 'N8', '#00ee00')}
          ${cad(737, 733, 49, 38, '600', '#00c000', 1)}
        </g>

        ${seg('M678 166V915', R)}${seg('M678 915V937', '#006000')}
        ${seg('M806 166V283', R)}${seg('M806 915V937', '#006000')}${seg('M1401 915V937', '#006000')}
        ${seg('M916 166V905H953', R)}
        ${seg('M806 195H1008', '#e05555', 2)}${seg('M1008 172V247', '#d84040')}
        ${seg('M1206 896V279H1242', '#d83020')}${seg('M1206 279H1242', '#a05010', 2)}${seg('M1206 896H1242', '#ff0060', 1)}
        ${seg('M971 302V622', '#e01010')}${seg('M843 302H994', '#e03030')}
        ${seg('M550 622V439H587', '#ff2020')}
        ${seg('M632 533V496H1401', '#ff0060', 2)}${seg('M1395 496V533', '#e04050')}${seg('M1401 496H1602', '#ff30ff', 2)}
        ${seg('M642 497V587H805', '#f0f0f0')}${seg('M1402 587H1602V497', '#f0f0f0')}
        ${seg('M497 622H1777', '#e00000')}
        ${seg('M497 915H1777', '#a00000', 2)}
        ${seg('M632 640H783', R)}${seg('M632 750H783', R)}${seg('M759 613V777', R)}
        ${seg('M795 753V716H1391V753', R)}
        ${seg('M809 804H1383', '#ffff00', 3)}${seg('M795 807H1391', '#e02020')}
        ${seg('M1315 286V895', '#ffff00', 3)}${seg('M1320 279V897', '#e02020')}
        ${seg('M1401 283V915', R)}
        ${seg('M1456 888V937', '#e00000')}

        <g shape-rendering="auto">
          ${seg('M794 208L818 183', '#e02020')}${seg('M995 208L1021 182', '#e02020')}
          ${seg('M958 289L985 315', '#d02020')}${seg('M959 609L985 635', '#d02020')}
          ${seg('M747 628L773 653', '#e01010')}${seg('M747 737L773 763', '#e01010')}
          ${seg('M795 807L815 787', R)}${seg('M1391 807L1372 787', '#f05060')}
          ${seg('M1301 298L1320 279', '#e02020')}${seg('M1301 877L1320 897', '#d02020')}
          ${seg('M1444 902L1469 928', '#e00000')}
          ${seg('M617 613L667 563', '#e8e8e8')}${seg('M782 613L833 562', '#e8e8e8')}
          ${seg('M1357 613L1409 562', '#e8e8e8')}${seg('M1577 613L1629 562', '#c8c8c8')}
        </g>

        <rect x="806.500" y="283" width="576" height="613" fill="none" stroke="#ffff00" stroke-width="2"/>
        <rect x="808" y="285" width="573" height="610" fill="none" stroke="#ff40ff" stroke-width="1"/>
        <path d="M805 282H1384" stroke="#ff40ff" stroke-width="1" fill="none"/>

        <g shape-rendering="auto">
          ${hex(652, 178)}${hex(807, 178)}${hex(1484, 178)}${hex(515, 622)}${hex(515, 915)}
          ${lab(630, 184, '25-19')}${lab(785, 184, '25-21')}${lab(1461, 184, '25-23')}
          ${lab(497, 628, '25-B')}${lab(497, 921, '25-A')}
          ${big(887, 475, 473, 'N8 KBSLJ-C8-150:C8@150', 39)}
          ${big(693, 622, 63, '900', 40, 'num')}${big(1451, 622, 84, '1200', 40, 'num')}
          <text x="542" y="928" fill="#00ff00" font-family="Noto Sans" font-size="11">Y</text>
          <polygon points="547,930 544,937 550,937" fill="#00ff00"/>
        </g>
      </svg>
      <slot></slot>`;
  }
}
customElements.define('gtj-canvas', GtjCanvas);
</script>
</body>
</html>
